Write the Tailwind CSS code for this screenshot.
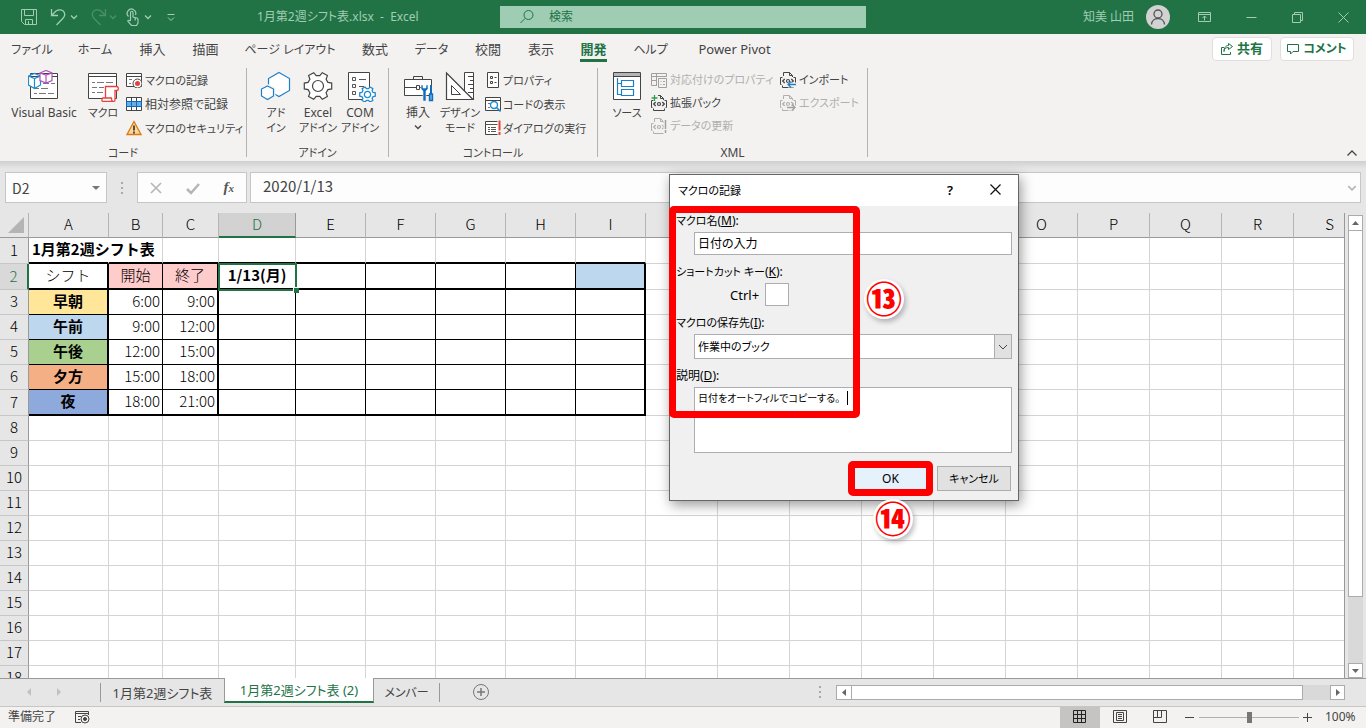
<!DOCTYPE html>
<html lang="ja">
<head>
  <meta charset="UTF-8" />
  <meta name="viewport" content="width=device-width, initial-scale=1.0" />
  <title>1月第2週シフト表.xlsx - Excel</title>
  <script src="https://cdn.jsdelivr.net/npm/@tailwindcss/browser@4"></script>
</head>
<body class="relative flex h-screen flex-col overflow-hidden bg-[#e6e6e6] font-['Noto_Sans','Noto_Sans_CJK_JP',sans-serif] text-[12px] text-[#444] [font-feature-settings:'palt']">

  <!-- Shared icon shapes -->
  <svg class="hidden">
    <symbol id="gear" viewBox="-15 -15 30 30">
      <path vector-effect="non-scaling-stroke" d="M9.9-3.6 13.7-2.9V2.9L9.9 3.6 8.1 6.8 9.4 10.4 4.3 13.3 1.8 10.4H-1.8L-4.3 13.3-9.4 10.4-8.1 6.8-9.9 3.6-13.7 2.9V-2.9L-9.9-3.6-8.1-6.8-9.4-10.4-4.3-13.3-1.8-10.4H1.8L4.3-13.3 9.4-10.4 8.1-6.8Z" />
      <circle vector-effect="non-scaling-stroke" r="5.5" />
    </symbol>
    <symbol id="xmldoc" viewBox="0 0 16 16">
      <path d="M3.500 4V.5h6l3 3V5M9.500.5v3h3M2.500 13.500v2h11v-2" fill="none" stroke="currentColor" />
      <path d="M1.500 12.500H.5v-7h2M14.500 12.500h1v-7h-2" fill="none" stroke="currentColor" />
      <path d="M4.700 7 2.700 9l2 2M11.300 7l2 2-2 2" fill="none" stroke="currentColor" stroke-width="1.300" />
      <circle cx="8" cy="9" r="1.500" fill="none" stroke="currentColor" stroke-width="1.200" />
    </symbol>
    <symbol id="chev" viewBox="0 0 8 8">
      <path d="M1 2.500 4 5.500 7 2.500" fill="none" stroke="currentColor" stroke-width="1.300" />
    </symbol>
  </svg>

  <!-- Title bar -->
  <header class="flex h-[34px] shrink-0 items-center bg-[#217346] text-[#a0cdb3]">
    <div class="flex w-[257px] items-center pl-5">
      <button aria-label="上書き保存"><svg class="size-[18px]" viewBox="0 0 18 18" fill="none" stroke="currentColor"><path d="M1.500 1.500h15v15h-12l-3-3zM4.500 1.500v6h9v-6M5.500 16.500v-5h7v5M8.500 13v3" /></svg></button>
      <button aria-label="元に戻す" class="ml-3"><svg class="size-[18px]" viewBox="0 0 18 18" fill="none" stroke="currentColor" stroke-width="1.300"><path d="M1.500 1v6.500H8M1.500 7.500 6 3c3-2 7-1.500 8.300 1.500 1 2.500 0 4.500-1.500 6L6.500 17" /></svg></button>
      <svg class="ml-[2px] size-2"><use href="#chev" /></svg>
      <button aria-label="やり直し" class="ml-3 text-[#4c9069]"><svg class="size-[18px]" viewBox="0 0 18 18" fill="none" stroke="currentColor" stroke-width="1.300"><path d="M15.500 1v6.500H9M15.500 7.500 11 3C8 1 4 1.500 2.700 4.500c-1 2.500 0 4.500 1.500 6L10.500 17" /></svg></button>
      <svg class="ml-[1px] size-2 text-[#4c9069]"><use href="#chev" /></svg>
      <button aria-label="タッチ/マウス モード" class="ml-2"><svg class="size-[18px]" viewBox="0 0 18 18" fill="none" stroke="currentColor" stroke-width="1.200"><path d="M3.500 8.500A4.300 4.300 0 1 1 10.500 7M5.500 12.500V4.500a1.200 1.200 0 0 1 2.500 0V9l4 1c.8.3 1 1 1 1.500V15l-1.500 2.500h-5L3 13.500c-.5-1 .5-2 2.500-.5M10.200 10v2.500" /></svg></button>
      <svg class="ml-[1px] size-2"><use href="#chev" /></svg>
      <button aria-label="クイック アクセスのカスタマイズ" class="ml-[15px]"><svg class="size-2" viewBox="0 0 8 8" fill="none" stroke="currentColor"><path d="M.5 1.500h7M1 4.500l3 3 3-3" /></svg></button>
    </div>
    <h1 class="w-[243px] whitespace-nowrap">1月第2週シフト表.xlsx&nbsp; -&nbsp; Excel</h1>
    <label class="flex h-[22px] w-[366px] items-center bg-[#9fcdb3] pl-5 text-[#217346]">
      <svg class="size-[14px]" viewBox="0 0 14 14" fill="none" stroke="currentColor"><circle cx="8.500" cy="5" r="4.500" /><path d="M5 8.500.5 13" /></svg>
      <input aria-label="検索" placeholder="検索" class="ml-[15px] min-w-0 flex-1 placeholder:text-[#217346] placeholder:opacity-100" />
    </label>
    <div class="ml-auto flex items-center">
      <span>知美 山田</span>
      <svg class="ml-3 size-6" viewBox="0 0 24 24" fill="none" stroke="#555" stroke-width="1.300"><circle cx="12" cy="12" r="12" fill="#d2d2d2" stroke="none" /><circle cx="12" cy="9" r="4" /><path d="M5.500 19.500c.5-8 12.500-8 13 0" /></svg>
      <button aria-label="リボンの表示オプション" class="ml-7"><svg class="size-[13px]" viewBox="0 0 13 13" fill="none" stroke="currentColor"><path d="M.5 1.500h12v9H.5zM.5 3.500h12M6.500 9.500V5M4.500 7l2-2 2 2" /></svg></button>
      <button aria-label="最小化" class="ml-[35px]"><svg class="size-[11px]" viewBox="0 0 11 11" stroke="currentColor"><path d="M.5 5.500h10" /></svg></button>
      <button aria-label="元のサイズに戻す" class="ml-[35px]"><svg class="size-[11px]" viewBox="0 0 11 11" fill="none" stroke="currentColor"><path d="M.5 2.500h8v8h-8zM2.500 2V.5h8v8H9" /></svg></button>
      <button aria-label="閉じる" class="mr-[17px] ml-[35px]"><svg class="size-[11px]" viewBox="0 0 11 11" stroke="currentColor"><path d="M.5.5l10 10M10.500.5l-10 10" /></svg></button>
    </div>
  </header>

  <!-- Ribbon tabs -->
  <nav class="flex h-[30px] shrink-0 items-center bg-[#f3f2f1] text-center text-[13px] whitespace-nowrap">
    <a href="#" class="w-16 pt-px text-[12px]">ファイル</a>
    <a href="#" class="w-[62px] pt-px text-[12px]">ホーム</a>
    <a href="#" class="w-[53px] pt-px">挿入</a>
    <a href="#" class="w-[53px] pt-px">描画</a>
    <a href="#" class="w-[116px] pt-px text-[12px]">ページ レイアウト</a>
    <a href="#" class="w-[54px] pt-px">数式</a>
    <a href="#" class="w-[59px] pt-px text-[12px]">データ</a>
    <a href="#" class="w-[54px] pt-px">校閲</a>
    <a href="#" class="w-[52px] pt-px">表示</a>
    <a href="#" class="flex h-full w-[53px] justify-center font-bold text-[#217346]"><span class="mt-[3px] h-[25px] border-b-[3px] border-[#217346] leading-[24px]">開発</span></a>
    <a href="#" class="w-[61px] pt-px text-[12px]">ヘルプ</a>
    <a href="#" class="w-[107px] pt-px">Power Pivot</a>
    <div class="mr-3 ml-auto flex gap-2 font-bold text-[#217346]">
      <button class="flex h-6 w-[60px] items-center justify-center gap-1 rounded-sm border border-[#e1dfdd] bg-white"><svg class="size-3" viewBox="0 0 12 12" fill="none" stroke="currentColor"><path d="M3 4.500H.5v7h9V9M3 8.500C3 5.500 5 4.500 7.500 4.500V6.500L11.500 3.500 7.500.5v2C4.500 2.500 3 5 3 8.500" /></svg>共有</button>
      <button class="flex h-6 w-[74px] items-center justify-center gap-1 rounded-sm border border-[#e1dfdd] bg-white text-[12px]"><svg class="size-3" viewBox="0 0 12 12" fill="none" stroke="currentColor"><path d="M.5 1.500h11v7H6L3.500 11V8.500h-3z" /></svg>コメント</button>
    </div>
  </nav>

  <!-- Ribbon -->
  <section class="relative flex h-[97px] shrink-0 bg-[#f3f2f1] pt-1 pb-1 leading-[15px] whitespace-nowrap">
    <div class="flex w-[247px] flex-col justify-between border-r border-[#b5b3b1]">
      <div class="flex">
        <button class="mt-[2px] ml-[2px] flex w-[84px] flex-col items-center gap-[3px]">
          <svg class="size-8" viewBox="0 0 32 32" fill="none"><path d="M2.500 3.500h27v25h-27z" fill="#fff" stroke="#444" /><path d="M2.500 6.500h27" stroke="#444" /><path d="M15 13.500h6M23 13.500h4M6 18.500h5M13 18.500h7M6 23.500h3M11 23.500h7M20 23.500h6" stroke="#777" /><path d="M.5 6 6.500 3.500l6 2.500v9l-6 3.500-6-3.500zM.5 6l6 2.500L12.500 6M6.500 8.500v10" fill="#fff" stroke="#1e8ad0" stroke-width="1.200" /><path d="M12 3 18 .5 24 3v7.500L18 13l-6-2.500zM12 3l6 2 6-2M18 5v8" fill="#fff" stroke="#b04fbf" stroke-width="1.200" /></svg>
          Visual Basic
        </button>
        <button class="mt-[2px] flex w-[34px] flex-col items-center gap-[3px]">
          <svg class="size-8" viewBox="0 0 32 32" fill="none"><path d="M1.500 3.500h28v25h-28z" fill="#fff" stroke="#444" /><path d="M1.500 6.500h28" stroke="#444" /><path d="M5 12.500h3M10 12.500h7M19 12.500h7M5 17.500h5M12 17.500h5M5 22.500h3M10 22.500h6" stroke="#777" /><path d="M18.500 28V16.500h11.500c1.800.5 1.800 4 0 4h-2V30c0 1-1 1.500-2 1.500h-10c-1.500 0-1.500-3.500 0-3.500h8.500c0 2 .5 3.500 1.500 3.500" fill="#fff" stroke="#e8413c" stroke-width="1.300" /></svg>
          <span class="text-[11px]">マクロ</span>
        </button>
        <div class="ml-[6px] flex flex-col">
          <button class="flex h-6 items-center gap-[3px]"><svg class="size-4" viewBox="0 0 16 16" fill="none"><path d="M.5 1.500h15v13H.5z" fill="#fff" stroke="#444" /><path d="M.5 4.500h15" stroke="#444" /><path d="M3 7.500h3M3 11.500h2" stroke="#777" /><circle cx="11.500" cy="11.500" r="4.500" fill="#fff" stroke="#444" /><circle cx="11.500" cy="11.500" r="2.500" fill="#e8413c" /></svg><span class="text-[11px]">マクロの記録</span></button>
          <button class="flex h-6 items-center gap-[3px]"><svg class="size-4" viewBox="0 0 16 16" fill="none"><path d="M.5 1.500h15v13H.5z" fill="#fff" stroke="#444" /><path d="M1 6h14v4.500H1z" fill="#64aee8" /><path d="M5.500 1.500v13M10.500 1.500v13" stroke="#444" /><path d="M.5 5.500h15v5H.5zM5.500 5.500v5M10.500 5.500v5" stroke="#0f6cbd" /></svg>相対参照で記録</button>
          <button class="flex h-6 items-center gap-[3px]"><svg class="size-4" viewBox="0 0 16 16"><path d="M8 1.500 15 14.500H1z" fill="#fbd79b" stroke="#d97a12" stroke-width="1.300" /><path d="M8 5.500v5M8 11.500v2" stroke="#222" stroke-width="1.500" /></svg><span class="text-[11px]">マクロのセキュリティ</span></button>
        </div>
      </div>
      <h2 class="-mb-[3px] text-center text-[11px]">コード</h2>
    </div>

    <div class="flex w-[142px] flex-col justify-between border-r border-[#b5b3b1]">
      <div class="mt-[2px] flex pl-2">
        <button class="flex w-[42px] flex-col items-center gap-[3px]">
          <svg class="size-8" viewBox="0 0 32 32" fill="#fff" stroke="#1e7fc7" stroke-width="1.200"><path d="M19 2.500 29.500 8.500v12L19 26.500 8.500 20.500V8.500z" /><path d="M7.500 16 13.500 19v7l-6 3.500-6-3.500v-7z" stroke="#f3f2f1" stroke-width="4" /><path d="M7.500 16 13.500 19v7l-6 3.500-6-3.500v-7z" /></svg>
          <span class="text-[11px]">アド<br />イン</span>
        </button>
        <button class="flex w-[42px] flex-col items-center gap-[3px]">
          <svg class="size-8" viewBox="0 0 32 32" fill="#fff" stroke="#444" stroke-width="1.200"><use href="#gear" x="1" y="1" width="30" height="30" /></svg>
          <span class="text-center">Excel<br /><span class="text-[11px]">アドイン</span></span>
        </button>
        <button class="flex w-[42px] flex-col items-center gap-[3px]">
          <svg class="size-8" viewBox="0 0 32 32" fill="none"><path d="M4.500 2.500h21v27h-21z" fill="#fff" stroke="#444" /><path d="M8.500 7.500h3v3h-3zM8.500 14.500h3v3h-3zM8.500 21.500h3v3h-3zM15 9.500h7M15 16.500h5" stroke="#555" /><g fill="#fff" stroke="#1e8ad0" stroke-width="1.300"><use href="#gear" x="15" y="16" width="17" height="17" /></g></svg>
          <span class="text-center">COM<br /><span class="text-[11px]">アドイン</span></span>
        </button>
      </div>
      <h2 class="-mb-[3px] text-center text-[11px]">アドイン</h2>
    </div>

    <div class="flex w-[209px] flex-col justify-between border-r border-[#b5b3b1]">
      <div class="flex pl-2">
        <button class="mt-[2px] flex w-[42px] flex-col items-center gap-[3px]">
          <svg class="size-8" viewBox="0 0 32 32" fill="none"><path d="M2.500 9.500h27v16h-27z" fill="#fff" stroke="#444" /><path d="M11.500 9V6.500h9V9M2.500 17.500h12M18 17.500h3" stroke="#444" /><path d="M14.500 15.500h3v4h-3z" fill="#fff" stroke="#444" /><path d="M19 15v4l2 2v10h3V21l2-2v-4h-2v3h-3v-3z" fill="#0f6cbd" stroke="#f3f2f1" stroke-width=".6" /><path d="M29 15v9" stroke="#0f6cbd" stroke-width="2" /><path d="M27.500 24h3v6.500h-3z" fill="#64aee8" stroke="#0f6cbd" stroke-width="1.400" /></svg>
          挿入
          <svg class="size-2"><use href="#chev" /></svg>
        </button>
        <button class="mt-[2px] flex w-[42px] flex-col items-center gap-[3px]">
          <svg class="size-8" viewBox="0 0 32 32" stroke="#444" fill="#fff"><path d="M20.500 2.500h9v27h-9z" /><path d="M24 6.500h5M26 10.500h3M24 14.500h5M26 18.500h3M24 22.500h5" /><path d="M2.500 3v26.500H29z" stroke-width="1.200" /><path d="M7.500 15.500v9h9z" /></svg>
          <span class="text-center text-[11px]">デザイン<br />モード</span>
        </button>
        <div class="ml-1 flex flex-col">
          <button class="flex h-6 items-center gap-[2px]"><svg class="size-4" viewBox="0 0 16 16" fill="none" stroke="#444"><path d="M2.500.5h11v15h-11z" fill="#fff" /><path d="M5.500 4.500h2v2h-2zM5.500 9.500h2v2h-2zM9.500 5.500h2M9.500 10.500h2" /></svg><span class="text-[11px]">プロパティ</span></button>
          <button class="flex h-6 items-center gap-[2px]"><svg class="size-4" viewBox="0 0 16 16" fill="none"><path d="M.5 1.500h15v13H.5z" fill="#fff" stroke="#444" /><path d="M.5 4.500h15" stroke="#444" /><path d="M3 7.500h2M3 11.500h2" stroke="#777" /><circle cx="9" cy="9" r="3.500" fill="#fff" stroke="#1e8ad0" stroke-width="1.400" /><path d="M11.500 11.500l4 4" stroke="#1e8ad0" stroke-width="1.600" /></svg><span class="text-[11px]">コードの表示</span></button>
          <button class="flex h-6 items-center gap-[2px]"><svg class="size-4" viewBox="0 0 16 16" fill="none"><path d="M12.500 14.500H.5v-13h12" fill="#fff" stroke="#444" /><path d="M.5 4.500h12M3 7.500h2M6 7.500h5M3 9.500h2M6 9.500h5M3 11.500h2M6 11.500h5" stroke="#555" /><path d="M14.500.5v10M14.500 12v3" stroke="#e8413c" stroke-width="2" /></svg><span class="text-[11px]">ダイアログの実行</span></button>
        </div>
      </div>
      <h2 class="-mb-[3px] text-center text-[11px]">コントロール</h2>
    </div>

    <div class="flex w-[270px] flex-col justify-between border-r border-[#b5b3b1]">
      <div class="flex pl-2">
        <button class="mt-[2px] flex w-[42px] flex-col items-center gap-[3px]">
          <svg class="size-8" viewBox="0 0 32 32" fill="none"><path d="M2.500 2.500h27v27h-27z" fill="#fff" stroke="#444" /><path d="M3 3h26v3H3z" fill="#b5b5b5" /><path d="M2.500 6.500h27" stroke="#444" /><path d="M6.500 8v16.500h4M6.500 13.500h4M10.500 10.500h12v6h-12zM10.500 19.500h12v6h-12z" stroke="#1e7fc7" stroke-width="1.200" /></svg>
          <span class="text-[11px]">ソース</span>
        </button>
        <div class="ml-[3px] flex w-[129px] flex-col">
          <button class="flex h-[23px] items-center gap-[3px] text-[#b1afad]"><svg class="size-4 shrink-0" viewBox="0 0 16 16" fill="none" stroke="#a0a0a0"><path d="M6 13.500H.5V1.500h15V5M.5 4.500h15M.5 8.500H6M5.500 1.500v12" /><path d="M7.500 6.500h8v9h-8zM9.500 9.500h1M12 9.500h2M9.500 12.500h1M12 12.500h2" /></svg><span class="text-[11px]">対応付けのプロパティ</span></button>
          <button class="flex h-[23px] items-center gap-[3px]"><svg class="size-4" viewBox="0 0 16 16"><use href="#xmldoc" /><path d="M0 0h7v5H0z" fill="#f3f2f1" /><path d="M3.500 0v6M.5 3h6" stroke="#2e9e4f" stroke-width="1.300" /></svg><span class="text-[11px]">拡張パック</span></button>
          <button class="flex h-[23px] items-center gap-[3px] text-[#b1afad]"><svg class="size-4" viewBox="0 0 16 16"><use href="#xmldoc" /><path d="M12.500 2h3.500v14h-3.500z" fill="#f3f2f1" /><path d="M14.500 2v9M14.500 12v3" stroke="#a0a0a0" stroke-width="1.500" /></svg><span class="text-[11px]">データの更新</span></button>
        </div>
        <div class="flex flex-col">
          <button class="flex h-[23px] items-center gap-[3px]"><svg class="size-4" viewBox="0 0 16 16"><use href="#xmldoc" /><path d="M8 10.500h8v5H8z" fill="#f3f2f1" /><path d="M16 12.500H8M11 9.500l-3 3 3 3" fill="none" stroke="#1e7fc7" stroke-width="1.300" /></svg><span class="text-[11px]">インポート</span></button>
          <button class="flex h-[23px] items-center gap-[3px] text-[#b1afad]"><svg class="size-4" viewBox="0 0 16 16"><use href="#xmldoc" /><path d="M8 10.500h8v5H8z" fill="#f3f2f1" /><path d="M7 12.500h8M12 9.500l3 3-3 3" fill="none" stroke="#a0a0a0" stroke-width="1.300" /></svg><span class="text-[11px]">エクスポート</span></button>
        </div>
      </div>
      <h2 class="-mb-[3px] text-center">XML</h2>
    </div>
    <button aria-label="リボンを折りたたむ" class="-mb-[3px] mt-auto mr-2 ml-auto"><svg class="size-3" viewBox="0 0 12 12" fill="none" stroke="#444" stroke-width="1.300"><path d="M1.500 7.500 6 3l4.500 4.500" /></svg></button>
  </section>

  <!-- Formula bar -->
  <section class="flex h-[52px] shrink-0 bg-linear-to-b from-[#cfcfcf] to-[#e6e6e6] to-15% pt-[11px] pr-[5px] pb-[10px] pl-[5px] font-['Noto_Sans_CJK_JP',sans-serif] text-[14px]">
    <div class="flex w-[102px] items-center border border-[#c6c6c6] bg-[#fdfdfd] pr-1">
      <input aria-label="名前ボックス" value="D2" class="min-w-0 flex-1 pt-[2px] pl-[6px]" />
      <svg class="size-3" viewBox="0 0 12 12"><path d="M2 4h8L6 8z" fill="#777" /></svg>
    </div>
    <div class="flex w-[30px] flex-col items-center justify-center gap-[3px]">
      <i class="size-[2px] bg-[#a8a8a8]"></i><i class="size-[2px] bg-[#a8a8a8]"></i><i class="size-[2px] bg-[#a8a8a8]"></i>
    </div>
    <div class="flex w-[110px] items-center justify-around border border-[#c6c6c6] bg-[#fdfdfd]">
      <button aria-label="キャンセル"><svg class="size-3" viewBox="0 0 12 12" stroke="#b5b5b5" stroke-width="1.600"><path d="M1 1l10 10M11 1 1 11" /></svg></button>
      <button aria-label="入力"><svg class="size-[14px]" viewBox="0 0 14 14" fill="none" stroke="#b5b5b5" stroke-width="2.500"><path d="M1 8l4 4 8-9" /></svg></button>
      <button aria-label="関数の挿入" class="font-['Liberation_Serif',serif] text-[15px] font-bold text-[#555] italic">f<span class="text-[11px]">x</span></button>
    </div>
    <div class="ml-[3px] flex flex-1 items-center border border-[#c6c6c6] bg-[#fdfdfd] pr-[3px]">
      <input aria-label="数式バー" value="2020/1/13" class="min-w-0 flex-1 pb-[2px] pl-3 text-[15px]" />
      <svg class="size-[10px] text-[#b5b5b5]"><use href="#chev" /></svg>
    </div>
  </section>

  <!-- Sheet -->
  <main class="flex min-h-0 flex-1">
    <div class="min-w-0 flex-1 overflow-hidden border-r border-[#999] bg-white font-['Noto_Sans_CJK_JP',sans-serif] text-[15px] leading-[20px] font-light text-black [font-feature-settings:normal]">
      <table class="w-px table-fixed border-separate border-spacing-0 bg-white whitespace-nowrap">
        <colgroup id="cols"></colgroup>
        <thead>
          <tr id="letters" class="h-[25px] bg-[#e6e6e6]">
            <th class="border-r border-b border-r-[#b5b5b5] border-b-[#999] p-0"><svg class="ml-2 size-4" viewBox="0 0 16 16"><path d="M16 0v16H0z" fill="#b4b4b4" /></svg></th>
          </tr>
        </thead>
        <tbody id="rows"></tbody>
      </table>
    </div>
    <!-- Vertical scroll bar -->
    <div class="mt-[2px] mr-[3px] ml-[3px] flex w-[15px] flex-col bg-[#d9d9d9]">
      <button aria-label="上へ" class="flex h-4 items-center justify-center border border-[#ababab] bg-white"><svg class="h-1 w-[7px]" viewBox="0 0 7 4"><path d="M0 4h7L3.500 0z" fill="#666" /></svg></button>
      <div class="flex-[368] border border-t-0 border-[#ababab] bg-white"></div>
      <div class="flex-[66]"></div>
      <button aria-label="下へ" class="flex h-[15px] items-center justify-center border border-[#ababab] bg-white"><svg class="h-1 w-[7px]" viewBox="0 0 7 4"><path d="M0 0h7L3.500 4z" fill="#666" /></svg></button>
    </div>
  </main>

  <!-- Sheet tabs -->
  <section class="flex h-[29px] shrink-0 border-b border-[#c6c6c6] whitespace-nowrap">
    <div class="flex flex-1 border-t border-[#999]">
      <div class="flex w-[100px] items-center pl-[26px] pb-[2px]">
        <svg class="h-2 w-[6px]" viewBox="0 0 6 8"><path d="M5 0v8L1 4z" fill="#c0c0c0" /></svg>
        <svg class="ml-6 h-2 w-[6px]" viewBox="0 0 6 8"><path d="M1 0v8l4-4z" fill="#c0c0c0" /></svg>
      </div>
      <button class="my-1 w-[124px] border-l border-[#999] text-[13px] leading-[18px]">1月第2週シフト表</button>
      <button class="-mt-px mb-[3px] w-[150px] border-x border-b-2 border-x-[#999] border-b-[#217346] bg-white pt-px text-[13px] leading-[18px] text-[#217346]">1月第2週シフト表 (2)</button>
      <button class="my-1 w-[66px] border-r border-[#999] text-[12px] leading-[18px]">メンバー</button>
      <button aria-label="新しいシート" class="ml-[33px] pb-[2px]"><svg class="size-4" viewBox="0 0 16 16" fill="none" stroke="#777"><circle cx="8" cy="8" r="7.500" /><path d="M4 8h8M8 4v8" stroke-width="1.500" /></svg></button>
      <div class="mr-[15px] mb-[2px] ml-auto flex flex-col items-center justify-center gap-[3px]">
        <i class="size-[2px] bg-[#a8a8a8]"></i><i class="size-[2px] bg-[#a8a8a8]"></i><i class="size-[2px] bg-[#a8a8a8]"></i>
      </div>
      <div class="mt-[6px] mr-[21px] flex h-[15px] w-[509px] bg-[#d9d9d9]">
        <button aria-label="左へ" class="flex w-4 items-center justify-center border border-[#ababab] bg-white"><svg class="h-[7px] w-1" viewBox="0 0 4 7"><path d="M4 0v7L0 3.500z" fill="#666" /></svg></button>
        <div class="w-[451px] border border-l-0 border-[#ababab] bg-white"></div>
        <button aria-label="右へ" class="ml-auto flex w-[15px] items-center justify-center border border-[#ababab] bg-white"><svg class="h-[7px] w-1" viewBox="0 0 4 7"><path d="M0 0v7l4-3.500z" fill="#666" /></svg></button>
      </div>
    </div>
  </section>

  <!-- Status bar -->
  <footer class="flex h-[21px] shrink-0 items-center bg-[#f3f2f1] pr-2 pl-2">
    <span class="pb-px">準備完了</span>
    <button aria-label="マクロの記録" class="ml-[19px]"><svg class="size-[15px]" viewBox="0 0 15 15" fill="none" stroke="#444"><path d="M6 12.500H.5V1.500h13V5M.5 3.500h13M3 6.500h3M3 9.500h2" /><circle cx="10" cy="9" r="4" /><circle cx="10" cy="9" r="1.500" fill="#444" /></svg></button>
    <div class="ml-auto flex h-full items-center">
      <button aria-label="標準" class="flex h-full w-10 items-center justify-center bg-[#c6c4c2] pb-px"><svg class="size-[14px]" viewBox="0 0 14 14" fill="none" stroke="#222"><path d="M.5.5h12v12H.5zM.5 4.500h12M.5 8.500h12M4.500.5v12M8.500.5v12" /></svg></button>
      <button aria-label="ページ レイアウト" class="flex h-full w-10 items-center justify-center pb-px"><svg class="size-[14px]" viewBox="0 0 14 14" fill="none" stroke="#444"><path d="M.5.5h13v12H.5zM3.500 2.500h7v8h-7zM5 4.500h4M5 6.500h4M5 8.500h4" /></svg></button>
      <button aria-label="改ページ プレビュー" class="flex h-full w-10 items-center justify-center pb-px"><svg class="size-[14px]" viewBox="0 0 14 14" fill="none" stroke="#444"><path d="M.5.5h13v12H.5zM4.500.5v7M8.500.5v7M.5 7.500h8" /></svg></button>
      <button aria-label="縮小" class="ml-[5px]"><svg class="size-[9px]" viewBox="0 0 9 9" stroke="#444"><path d="M0 4.500h9" /></svg></button>
      <input type="range" aria-label="ズーム" class="ml-[5px] h-[11px] w-[100px] appearance-none bg-[linear-gradient(#b0b0b0,#b0b0b0)] bg-[length:100%_1px] bg-center bg-no-repeat [&::-webkit-slider-thumb]:h-[11px] [&::-webkit-slider-thumb]:w-[5px] [&::-webkit-slider-thumb]:appearance-none [&::-webkit-slider-thumb]:bg-[#777]" />
      <button aria-label="拡大" class="ml-1"><svg class="size-[9px]" viewBox="0 0 9 9" stroke="#444"><path d="M0 4.500h9M4.500 0v9" /></svg></button>
      <span class="ml-[13px] w-[33px] pb-px">100%</span>
    </div>
  </footer>

  <!-- Record macro dialog -->
  <form class="absolute top-[174px] left-[669px] flex w-[350px] flex-col border border-[#666] bg-[#f0f0f0] text-[12px] leading-[16px] text-black shadow-[2px_4px_12px_rgba(0,0,0,0.4)]">
    <div class="flex h-[31px] items-center bg-white pl-2">
      <h2 class="text-[11px]">マクロの記録</h2>
      <button type="button" aria-label="ヘルプ" class="ml-auto w-11 pb-[2px] text-[13px] font-semibold">?</button>
      <button type="button" aria-label="閉じる" class="flex w-[46px] justify-center pb-[2px]"><svg class="size-[11px]" viewBox="0 0 11 11" stroke="#111" stroke-width="1.200"><path d="M.5.5l10 10M10.500.5l-10 10" /></svg></button>
    </div>
    <div class="flex flex-col pt-[7px] pr-[6px] pb-[9px] pl-[6px]">
      <label for="mname"><span class="text-[11px]">マクロ名</span>(<u>M</u>):</label>
      <input id="mname" value="日付の入力" class="mt-[3px] ml-[18px] h-[23px] border border-[#abadb3] bg-white pb-[2px] pl-[3px]" />
      <label for="mkey" class="mt-[9px]"><span class="text-[11px]">ショートカット キー</span>(<u>K</u>):</label>
      <div class="mt-[3px] ml-[54px] flex items-center gap-[6px]">
        <span class="text-[13px]">Ctrl+</span>
        <input id="mkey" class="h-[23px] w-6 border border-[#abadb3] bg-white" />
      </div>
      <label for="mplace" class="mt-[9px]"><span class="text-[11px]">マクロの保存先</span>(<u>I</u>):</label>
      <div class="relative mt-[3px] ml-[18px]">
        <select id="mplace" class="block h-[25px] w-full appearance-none border border-[#abadb3] bg-white pl-[3px] text-[11px]">
          <option>作業中のブック</option>
        </select>
        <span class="pointer-events-none absolute inset-y-0 right-0 flex w-[18px] items-center justify-center border border-[#abadb3] bg-[#e1e1e1]"><svg class="size-[10px]" viewBox="0 0 10 10"><path d="M1 3l4 4 4-4" fill="none" stroke="#444" /></svg></span>
      </div>
      <label for="mdesc" class="mt-[9px]">説明(<u>D</u>):</label>
      <div class="relative mt-[3px] ml-[18px]">
        <textarea id="mdesc" class="block h-[66px] w-full resize-none border border-[#abadb3] bg-white py-[2px] pl-[3px] text-[10px] leading-[16px]">日付をオートフィルでコピーする。</textarea>
        <i class="absolute top-1 left-[153px] h-[14px] w-px bg-black"></i>
      </div>
      <div class="mt-[13px] mr-px flex justify-end gap-1">
        <button type="button" class="relative h-[25px] w-[85px] bg-[#e5f1fb]">OK<i class="absolute -inset-y-[5px] inset-x-0 rounded-[5px] border-[7px] border-[#f00]"></i></button>
        <button type="button" class="h-[25px] w-[74px] border border-[#adadad] bg-[#e1e1e1] text-[11px]">キャンセル</button>
      </div>
    </div>
    <!-- Step marks -->
    <i class="pointer-events-none absolute top-[31px] -left-px h-[212px] w-[191px] rounded-[5px] border-[7px] border-[#f00]"></i>
    <span class="absolute top-[104px] left-[194px] flex size-10 items-center justify-center rounded-full bg-white font-['Noto_Sans_CJK_JP',sans-serif] text-[36px] leading-[36px] font-black text-[#f00] shadow-[2px_3px_5px_rgba(0,0,0,0.25)]"><span class="pb-1">⑬</span></span>
    <span class="absolute top-[324px] left-[203px] flex size-10 items-center justify-center rounded-full bg-white font-['Noto_Sans_CJK_JP',sans-serif] text-[36px] leading-[36px] font-black text-[#f00] shadow-[2px_3px_5px_rgba(0,0,0,0.25)]"><span class="pb-1">⑭</span></span>
  </form>

  <script>
    const widths = [80, 54, 56, 77, 70, 70, 70, 70, 70];
    const letters = "ABCDEFGHIJKLMNOPQRS".split("");
    const shifts = {
      3: ["早朝", "6:00", "9:00", "bg-[#ffe699]"],
      4: ["午前", "9:00", "12:00", "bg-[#bdd7ee]"],
      5: ["午後", "12:00", "15:00", "bg-[#a9d08e]"],
      6: ["夕方", "15:00", "18:00", "bg-[#f4b084]"],
      7: ["夜", "18:00", "21:00", "bg-[#8ea9db]"],
    };

    document.getElementById("cols").innerHTML =
      '<col style="width:29px">' + letters.map((l, c) => `<col style="width:${widths[c] || 72}px">`).join("");

    document.getElementById("letters").innerHTML += letters.map((l) =>
      l === "D"
        ? '<th class="border-r border-b-2 border-r-[#999] border-b-[#217346] bg-[#d2d2d2] p-0 pb-px font-light text-[#217346]">D</th>'
        : `<th class="border-r border-b border-r-[#b5b5b5] border-b-[#999] p-0 pb-[2px] font-light">${l}</th>`
    ).join("");

    function borders(r, c) {
      if (r === 1) return (c === 0 ? "border-r border-r-white " : "border-r border-r-[#d4d4d4] ") + (c < 9 ? "border-b-2 border-b-black" : "border-b border-b-[#d4d4d4]");
      if (r > 7 || c > 8) return "border-r border-b border-[#d4d4d4]";
      const right = c === 0 || c === 2 || c === 8 ? "border-r-2 " : "border-r ";
      return right + (r === 2 || r === 7 ? "border-b-2 border-black" : "border-b border-black");
    }

    function content(r, c) {
      if (r === 1 && c === 0) return ["text-left font-bold pl-[3px]", "1月第2週シフト表"];
      if (r === 2) {
        if (c === 0) return ["text-center", "シフト"];
        if (c === 1) return ["text-center bg-[#ffcccc]", "開始"];
        if (c === 2) return ["text-center bg-[#ffcccc]", "終了"];
        if (c === 3) return ["relative text-center font-bold", '1/13(月)<i class="absolute -top-px -left-px -right-[2px] -bottom-[3px] border-2 border-[#217346]"></i><i class="absolute -right-1 -bottom-[5px] size-[6px] border-t border-l border-white bg-[#217346]"></i>'];
        if (c === 8) return ["bg-[#bdd7ee]", ""];
      }
      const s = shifts[r];
      if (s && c === 0) return ["text-center font-bold " + s[3], s[0]];
      if (s && c < 3) return ["text-right pr-[2px]", s[c]];
      return ["", ""];
    }

    let html = "";
    for (let r = 1; r <= 18; r++) {
      const head = r === 2 ? "border-r-2 border-r-[#217346] bg-[#d9d9d9] text-[#217346]" : "border-r border-r-[#999] bg-[#e6e6e6]";
      html += `<tr class="${r < 3 || r === 7 ? "h-[26px]" : "h-[25px]"}"><th class="border-b border-b-[#c6c6c6] p-0 pb-[2px] font-light ${head}">${r}</th>`;
      letters.forEach((l, c) => {
        const [cls, text] = content(r, c);
        html += `<td class="p-0 pb-[2px] ${borders(r, c)} ${cls}">${text}</td>`;
      });
      html += "</tr>";
    }
    document.getElementById("rows").innerHTML = html;
  </script>
</body>
</html>
